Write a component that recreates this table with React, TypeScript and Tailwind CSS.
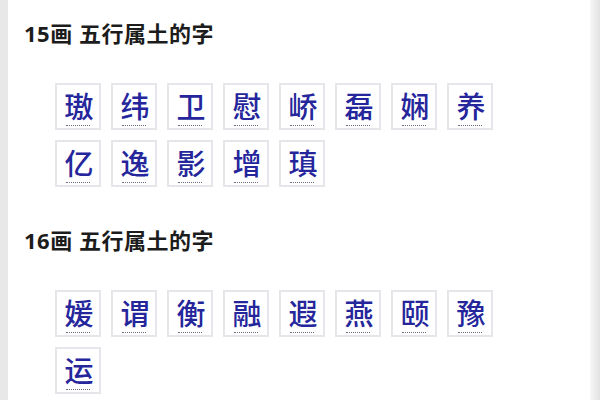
import React from "react";

const sections = [
  { title: "15画 五行属土的字", chars: ["璈", "纬", "卫", "慰", "峤", "磊", "娴", "养", "亿", "逸", "影", "增", "瑱"], mt: "mt-[19px]" },
  { title: "16画 五行属土的字", chars: ["媛", "谓", "衡", "融", "遐", "燕", "颐", "豫", "运"], mt: "mt-[39px]" },
];

function Box({ c }: { c: string }) {
  return (
    <div className="w-[46px] h-[47px] border-2 border-[#e6e6ea] bg-white flex flex-col items-center pt-[7px]">
      <div className="text-[29px] leading-[29px] font-medium text-[#26269c] ml-[2px]">{c}</div>
      <div className="mt-[4px] w-[24px] border-b border-dotted border-[#6e6c80]" />
    </div>
  );
}

export default function App() {
  return (
    <div
      className="w-[600px] h-[400px] flex bg-white overflow-hidden"
      style={{ fontFamily: '"Noto Sans", "Noto Sans CJK SC", sans-serif' }}
    >
      <div className="w-[8px] h-full bg-[#e8e8e8]" />
      <div className="flex-1 pl-[16px]">
        {sections.map((s, i) => (
          <div key={i}>
            <div className={`${s.mt} text-[22px] leading-[28px] font-bold text-[#1c1c1c] tracking-[0.5px]`}>{s.title}</div>
            <div className="mt-[36px] ml-[31px] grid grid-cols-[repeat(8,46px)] gap-x-[10px] gap-y-[10px]">
              {s.chars.map((c, j) => (
                <Box key={j} c={c} />
              ))}
            </div>
          </div>
        ))}
      </div>
      <div className="w-[10px] h-full bg-gradient-to-r from-[#f7f7f7] to-[#e2e2e2]" />
    </div>
  );
}
